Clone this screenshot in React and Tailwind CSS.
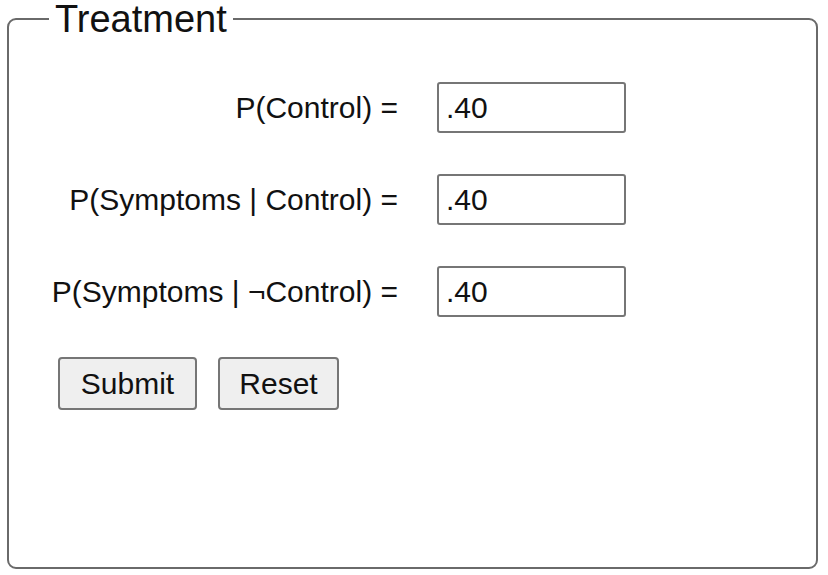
import React from 'react'

const rows = [
  { label: 'P(Control) =', value: '.40' },
  { label: 'P(Symptoms | Control) =', value: '.40' },
  { label: 'P(Symptoms | \u00acControl) =', value: '.40' },
]

export default function App() {
  return (
    <div
      className="bg-white w-[828px] h-[575px] pl-[7px] text-[#111]"
      style={{ fontFamily: '"Liberation Sans", Arial, sans-serif' }}
    >
      <fieldset className="w-[811px] h-[569px] border-2 border-[#6a6a6a] rounded-[9px]">
        <legend className="ml-[40px] px-[6px] text-[38px] leading-[38px]">Treatment</legend>

        <div className="mt-[44px] grid grid-cols-[389px_189px] gap-x-[39px] gap-y-[41px] items-center">
          {rows.map((row) => (
            <React.Fragment key={row.label}>
              <label className="text-right text-[30px] leading-none whitespace-nowrap">
                {row.label}
              </label>
              <input
                type="text"
                defaultValue={row.value}
                className="h-[51px] w-[189px] border-2 border-[#767676] rounded-[3px] px-[7px] text-[30px] text-[#111] bg-white outline-none"
              />
            </React.Fragment>
          ))}
        </div>

        <div className="mt-[40px] ml-[49px] flex gap-[21px]">
          <button className="h-[53px] w-[139px] text-[30px] bg-[#efefef] border-2 border-[#767676] rounded-[4px]">
            Submit
          </button>
          <button className="h-[53px] w-[121px] text-[30px] bg-[#efefef] border-2 border-[#767676] rounded-[4px]">
            Reset
          </button>
        </div>
      </fieldset>
    </div>
  )
}
